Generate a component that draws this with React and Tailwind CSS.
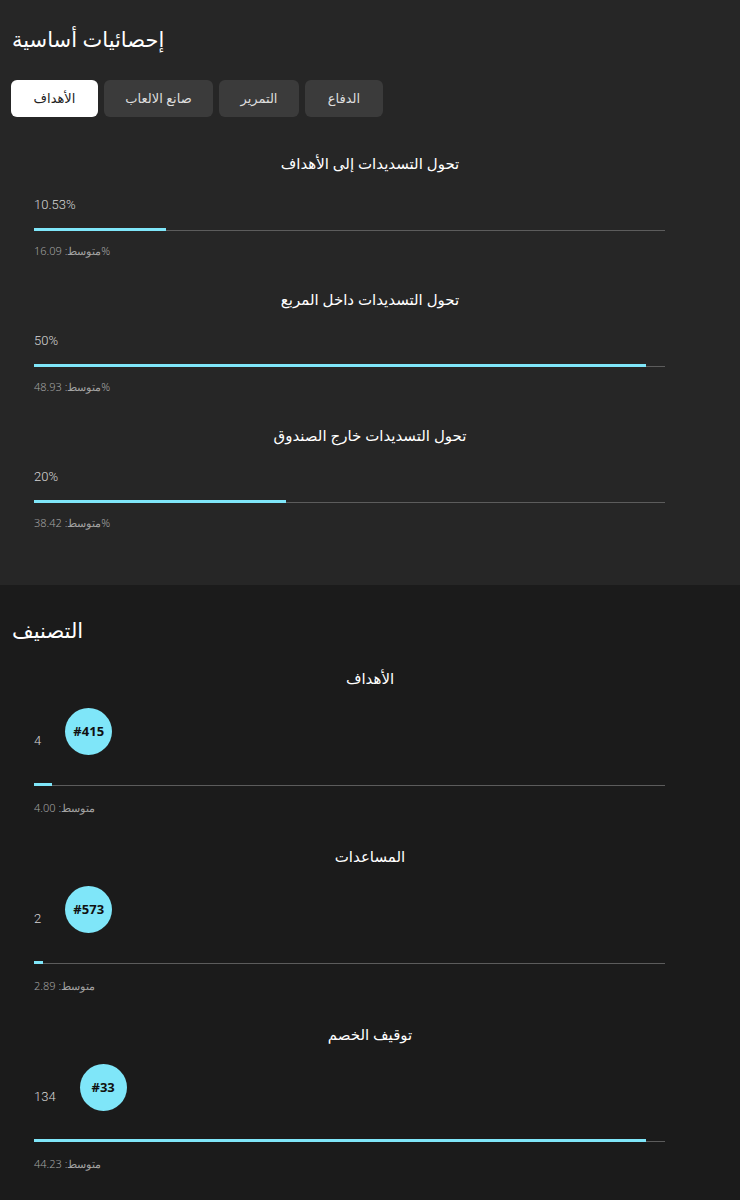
const tabs = [
  { label: 'الأهداف', w: 'w-[87px]', active: true },
  { label: 'صانع الالعاب', w: 'w-[109px]' },
  { label: 'التمرير', w: 'w-[80px]' },
  { label: 'الدفاع', w: 'w-[78px]' },
];

const keyStats = [
  { title: 'تحول التسديدات إلى الأهداف', value: '10.53%', fill: 132, avg: 'متوسط: 16.09%' },
  { title: 'تحول التسديدات داخل المربع', value: '50%', fill: 612, avg: 'متوسط: 48.93%' },
  { title: 'تحول التسديدات خارج الصندوق', value: '20%', fill: 252, avg: 'متوسط: 38.42%' },
];

const rankings = [
  { title: 'الأهداف', value: '4', rank: '#415', fill: 18, avg: 'متوسط: 4.00' },
  { title: 'المساعدات', value: '2', rank: '#573', fill: 9, avg: 'متوسط: 2.89' },
  { title: 'توقيف الخصم', value: '134', rank: '#33', fill: 612, avg: 'متوسط: 44.23' },
];

function Bar({ fill }) {
  return (
    <div className="relative h-[3px] w-[631px]">
      <div className="absolute bottom-0 left-0 h-px w-full bg-[#5c5c5c]" />
      <div className="absolute left-0 top-0 h-[3px] bg-[#7fe6f9]" style={{ width: fill }} />
    </div>
  );
}

export default function App() {
  return (
    <div className="w-[740px] min-h-[1200px] bg-[#1b1b1b] text-white font-['Noto_Sans','DejaVu_Sans',sans-serif]">
      {/* Key stats */}
      <section className="bg-[#262626] pt-[26px] pb-[54px]">
        <h2 className="px-3 text-[21px] leading-[26px] font-normal">إحصائيات أساسية</h2>

        <div className="mt-[28px] flex gap-[6px] px-[11px]">
          {tabs.map((t) => (
            <button
              key={t.label}
              className={`${t.w} h-[37px] rounded-[6px] text-[13px] ${
                t.active ? 'bg-white text-[#222]' : 'bg-[#3b3b3b] text-[#dedede]'
              }`}
            >
              {t.label}
            </button>
          ))}
        </div>

        <div className="mt-[34px] flex flex-col gap-[28px]">
          {keyStats.map((s) => (
            <div key={s.title}>
              <h3 className="text-center text-[15px] leading-6 font-normal">{s.title}</h3>
              <div className="px-[34px]">
                <div className="mt-5 font-['Roboto',sans-serif] text-[13px] leading-5 font-light text-[#d6d6d6]">
                  {s.value}
                </div>
                <div className="mt-[13px]">
                  <Bar fill={s.fill} />
                </div>
                <div className="mt-3 text-[11px] leading-4 font-light text-[#a3a3a3]">{s.avg}</div>
              </div>
            </div>
          ))}
        </div>
      </section>

      {/* Ranking */}
      <section className="pt-[32px] pb-[29px]">
        <h2 className="px-3 text-[21px] leading-[26px] font-normal">التصنيف</h2>

        <div className="mt-[23px] flex flex-col gap-[28px]">
          {rankings.map((r) => (
            <div key={r.title}>
              <h3 className="text-center text-[15px] leading-6 font-normal">{r.title}</h3>
              <div className="px-[34px]">
                <div className="mt-[18px] flex items-start gap-6">
                  <span className="mt-[23px] font-['Roboto',sans-serif] text-[13px] leading-5 font-light text-[#d6d6d6]">
                    {r.value}
                  </span>
                  <div className="flex h-[47px] w-[47px] items-center justify-center rounded-full bg-[#7fe6f9] text-[13px] font-bold text-[#111]">
                    {r.rank}
                  </div>
                </div>
                <div className="mt-[28px]">
                  <Bar fill={r.fill} />
                </div>
                <div className="mt-[14px] text-[11px] leading-4 font-light text-[#a3a3a3]">{r.avg}</div>
              </div>
            </div>
          ))}
        </div>
      </section>
    </div>
  );
}
